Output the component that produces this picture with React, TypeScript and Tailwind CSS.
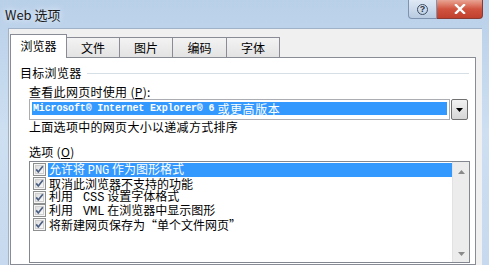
import React from "react";

const cjk = "font-['Noto_Sans_CJK_SC','Noto_Sans',sans-serif]";
const mono = "font-['Liberation_Mono','Noto_Sans_CJK_SC',monospace]";

function Check() {
  return (
    <svg width="13" height="13" viewBox="0 0 13 13" className="shrink-0">
      <defs>
        <linearGradient id="cbg" x1="0" y1="0" x2="1" y2="1">
          <stop offset="0" stopColor="#dcdcdc" />
          <stop offset="1" stopColor="#fbfbfb" />
        </linearGradient>
      </defs>
      <rect x="0.5" y="0.5" width="12" height="12" fill="#f6f6f6" stroke="#8e8f8f" />
      <rect x="2.5" y="2.5" width="8" height="8" fill="url(#cbg)" stroke="#cfcfcf" />
      <path d="M3.2 6.4 L5.3 9 L9.8 3.3" fill="none" stroke="#4b5f83" strokeWidth="1.7" />
    </svg>
  );
}

function Tab({ label, w }: { label: string; w: number }) {
  return (
    <div
      className="h-[20px] border-t border-r border-[#898c95] bg-gradient-to-b from-[#f3f3f3] to-[#e3e3e3] flex items-center justify-center text-[12px] leading-none text-black"
      style={{ width: w }}
    >
      {label}
    </div>
  );
}

function Item({ children, sel }: { children: React.ReactNode; sel?: boolean }) {
  return (
    <div className="h-[13.7px] flex items-center pl-[3px]">
      <Check />
      <div
        className={
          "ml-[2px] flex-1 h-full flex items-center pl-[1px] whitespace-nowrap " +
          (sel ? "bg-[#3399ff] text-white" : "text-black")
        }
      >
        <span className="text-[12px] leading-[12px]">{children}</span>
      </div>
    </div>
  );
}

export default function App() {
  return (
    <div
      className={
        "w-[489px] h-[265px] overflow-hidden flex flex-col bg-gradient-to-b from-[#b9d0e9] via-[#cddff1] to-[#c6d9ee] " +
        cjk
      }
    >
      {/* title bar */}
      <div className="h-[28px] shrink-0 flex items-start">
        <div className="mt-[6px] ml-[5px] text-[13px] leading-[18px] text-[#1a1a1a] [text-shadow:0_0_6px_#ffffff]">
          Web 选项
        </div>
        <div className="ml-auto mr-[6px] flex">
          <div className="w-[29px] h-[19px] rounded-bl-[4px] border border-t-0 border-[#7d93b0] bg-gradient-to-b from-[#dfe9f5] to-[#b9cbe1] flex items-center justify-center">
            <div className="w-[11px] h-[11px] rounded-full border border-[#3f4e63] flex items-center justify-center text-[9px] leading-none font-bold text-[#2a3445] font-['Liberation_Sans',sans-serif]">
              ?
            </div>
          </div>
          <div className="w-[46px] h-[19px] rounded-br-[4px] border border-t-0 border-l-0 border-[#8a3a32] bg-gradient-to-b from-[#e8a493] via-[#d0533f] to-[#c0402e] flex items-center justify-center">
            <svg width="12" height="10" viewBox="0 0 12 10">
              <path d="M2 1 L10 9 M10 1 L2 9" stroke="#ffffff" strokeWidth="2.4" strokeLinecap="square" />
            </svg>
          </div>
        </div>
      </div>

      {/* body */}
      <div className="flex-1 ml-[8px] mr-[7px] bg-[#f0f0f0] border-l border-t border-[#9fb2c8] flex flex-col pl-[1px] pr-[6px]">
        {/* tabs */}
        <div className="h-[28px] shrink-0 flex items-end">
          <div className="relative z-10 w-[57px] h-[24px] -mb-px border-l border-t border-r border-[#898c95] bg-white flex items-start justify-center pt-[5px] text-[12px] leading-none text-black">
            浏览器
          </div>
          <Tab label="文件" w={53} />
          <Tab label="图片" w={53} />
          <Tab label="编码" w={54} />
          <Tab label="字体" w={53} />
        </div>

        {/* panel */}
        <div className="flex-1 border border-[#898c95] bg-white pl-[9px] pr-[6px] text-black tracking-[0.3px]">
          <div className="mt-[8px] h-[14px] flex items-center">
            <span className="text-[12px] leading-none">目标浏览器</span>
            <div className="flex-1 ml-[5px] h-px bg-[#d5dfe5]" />
          </div>

          <div className="pl-[9px]">
            <div className="mt-[5px] h-[14px] flex items-center text-[12px] leading-none">
              <span>
                查看此网页时使用 (<span className="underline">P</span>):
              </span>
            </div>

            <div className="flex h-[21px] mr-[-1px]">
              <div className="w-[421px] h-full border border-[#abadb3] bg-white p-[2px] pb-[4px]">
                <div className="h-full bg-[#3399ff] text-white flex items-center pl-[1px] whitespace-nowrap tracking-normal">
                  <span className={mono + " text-[10px] font-bold tracking-[-0.15px] leading-none"}>
                    Microsoft® Internet Explorer® 6{" "}
                  </span>
                  <span className="text-[12px] leading-none ml-[3px] tracking-[0.6px]">或更高版本</span>
                </div>
              </div>
              <div className="ml-[1px] w-[17px] h-full border border-[#707070] rounded-[2px] bg-gradient-to-b from-[#f2f2f2] to-[#d6d6d6] flex items-center justify-center">
                <svg width="7" height="4" viewBox="0 0 7 4">
                  <path d="M0 0 H7 L3.5 4 Z" fill="#000" />
                </svg>
              </div>
            </div>

            <div className="h-[14px] flex items-center text-[12px] leading-none">
              上面选项中的网页大小以递减方式排序
            </div>

            <div className="mt-[11px] h-[14px] flex items-center text-[12px] leading-none">
              <span>
                选项 (<span className="underline">O</span>)
              </span>
            </div>

            <div className="mt-[2px] h-[102px] mr-[-1px] border border-[#828790] bg-white flex tracking-normal">
              <div className="flex-1 pt-[1px]">
                <Item sel>
                  允许将 <span className={mono + " text-[12px]"}>PNG</span> 作为图形格式
                </Item>
                <Item>取消此浏览器不支持的功能</Item>
                <Item>
                  利用 <span className={mono + " text-[12px]"}>&nbsp;CSS</span> 设置字体格式
                </Item>
                <Item>
                  利用 <span className={mono + " text-[12px]"}>&nbsp;VML</span> 在浏览器中显示图形
                </Item>
                <Item>将新建网页保存为“单个文件网页”</Item>
              </div>
              <div className="w-[17px] bg-[#ececec] border-l border-[#e2e2e2] flex flex-col justify-between items-center pt-[8px] pb-[6px]">
                <svg width="7" height="4" viewBox="0 0 7 4">
                  <path d="M0 4 H7 L3.5 0 Z" fill="#8a8a8a" />
                </svg>
                <svg width="7" height="4" viewBox="0 0 7 4">
                  <path d="M0 0 H7 L3.5 4 Z" fill="#8a8a8a" />
                </svg>
              </div>
            </div>
          </div>
        </div>
      </div>
    </div>
  );
}
